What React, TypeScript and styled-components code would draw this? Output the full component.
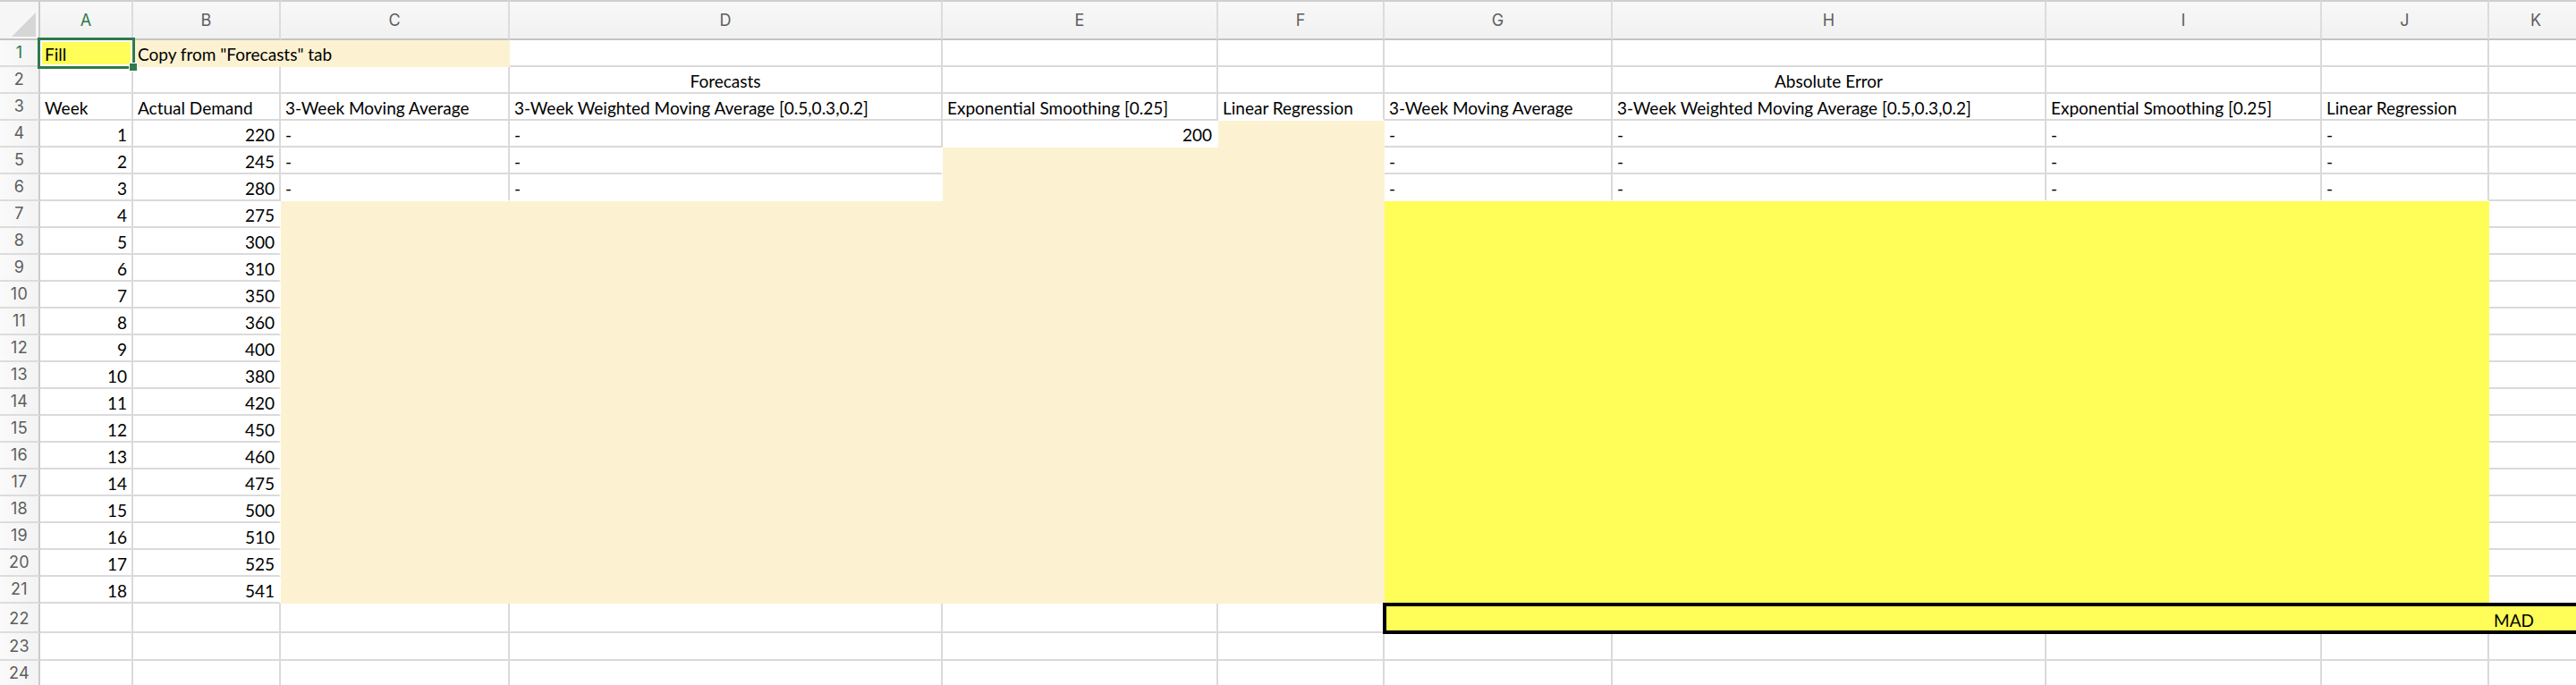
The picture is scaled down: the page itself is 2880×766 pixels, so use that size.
import React from 'react';
import styled, { createGlobalStyle } from 'styled-components';

type Fill = 'pale' | 'yellow' | undefined;
type Align = 'left' | 'right' | 'center';

interface CellDef {
  text?: string;
  align?: Align;
  span?: number;
}

const GRID = '#dadada';
const PALE = '#fcf2d2';
const YELLOW = '#fffd57';
const GREEN = '#2f7a4c';
const HEAD_TEXT = '#5e5e5e';

const COLS = ['A', 'B', 'C', 'D', 'E', 'F', 'G', 'H', 'I', 'J', 'K'];
const COL_WIDTHS = [45, 104, 165, 256, 484, 308, 186, 255, 485, 308, 187, 106];
const ROW_HEIGHTS = [45, ...Array(21).fill(30), 33, 31, 30];
const ROW_COUNT = 24;

const DEMAND = [220, 245, 280, 275, 300, 310, 350, 360, 400, 380, 420, 450, 460, 475, 500, 510, 525, 541];

const HEADERS = [
  'Week',
  'Actual Demand',
  '3-Week Moving Average',
  '3-Week Weighted Moving Average [0.5,0.3,0.2]',
  'Exponential Smoothing [0.25]',
  'Linear Regression',
  '3-Week Moving Average',
  '3-Week Weighted Moving Average [0.5,0.3,0.2]',
  'Exponential Smoothing [0.25]',
  'Linear Regression',
];

const fillAt = (r: number, c: number): Fill => {
  if (r === 1) {
    if (c === 0) return 'yellow';
    if (c === 1 || c === 2) return 'pale';
  }
  if (r === 4 && c === 5) return 'pale';
  if ((r === 5 || r === 6) && (c === 4 || c === 5)) return 'pale';
  if (r >= 7 && r <= 21) {
    if (c >= 2 && c <= 5) return 'pale';
    if (c >= 6 && c <= 9) return 'yellow';
  }
  if (r === 22 && c >= 6 && c <= 10) return 'yellow';
  return undefined;
};

const cellAt = (r: number, c: number): CellDef | null => {
  if (r === 1) {
    if (c === 0) return { text: 'Fill' };
    if (c === 1) return { text: 'Copy from "Forecasts" tab', span: 2 };
    if (c === 2) return null;
  }
  if (r === 2) {
    if (c === 3) return { text: 'Forecasts', align: 'center' };
    if (c === 7) return { text: 'Absolute Error', align: 'center' };
  }
  if (r === 3 && c < HEADERS.length) return { text: HEADERS[c] };
  if (r >= 4 && r <= 21) {
    if (c === 0) return { text: String(r - 3), align: 'right' };
    if (c === 1) return { text: String(DEMAND[r - 4]), align: 'right' };
    if (r <= 6 && (c === 2 || c === 3 || (c >= 6 && c <= 9))) return { text: '-' };
    if (r === 4 && c === 4) return { text: '200', align: 'right' };
  }
  if (r === 22 && c === 10) return { text: 'MAD' };
  return {};
};

const GlobalStyle = createGlobalStyle`
  html, body {
    margin: 0;
    padding: 0;
    background: #ffffff;
    overflow: hidden;
  }
  #root {
    width: 2880px;
    height: 766px;
    overflow: hidden;
  }
`;

const Sheet = styled.div`
  display: grid;
  grid-template-columns: ${COL_WIDTHS.map((w) => `${w}px`).join(' ')};
  grid-template-rows: ${ROW_HEIGHTS.map((h) => `${h}px`).join(' ')};
  width: max-content;
  font-family: Lato, 'Liberation Sans', sans-serif;
`;

const Corner = styled.div`
  grid-row: 1;
  grid-column: 1;
  box-sizing: border-box;
  background: #f6f6f6;
  border-top: 2px solid #cfcfcf;
  border-right: 2px solid #cbcbcb;
  border-bottom: 2px solid #c4c4c4;
  display: flex;
  align-items: flex-end;
  justify-content: flex-end;
`;

const ColHeader = styled.div<{ $col: number; $active: boolean }>`
  grid-row: 1;
  grid-column: ${(p) => p.$col};
  box-sizing: border-box;
  background: linear-gradient(#f8f8f8, #f1f1f1);
  border-top: 2px solid #cfcfcf;
  border-right: 2px solid #dcdcdc;
  border-bottom: 2px solid #c4c4c4;
  display: flex;
  align-items: center;
  justify-content: center;
  font-family: Inter, 'Liberation Sans', sans-serif;
  font-size: 18px;
  color: ${(p) => (p.$active ? GREEN : HEAD_TEXT)};
`;

const RowHeader = styled.div<{ $row: number; $active: boolean }>`
  grid-row: ${(p) => p.$row};
  grid-column: 1;
  box-sizing: border-box;
  background: linear-gradient(90deg, #fafafa, #f3f3f3);
  border-right: 2px solid #cbcbcb;
  border-bottom: 2px solid #dcdcdc;
  display: flex;
  align-items: flex-end;
  justify-content: center;
  padding-bottom: 4px;
  font-family: Inter, 'Liberation Sans', sans-serif;
  font-size: 18px;
  line-height: 20px;
  letter-spacing: 0.3px;
  color: ${(p) => (p.$active ? GREEN : HEAD_TEXT)};
`;

const Cell = styled.div<{
  $row: number;
  $col: number;
  $span: number;
  $fill: Fill;
  $align: Align;
  $hideRight: boolean;
  $hideBottom: boolean;
}>`
  grid-row: ${(p) => p.$row};
  grid-column: ${(p) => p.$col} / span ${(p) => p.$span};
  box-sizing: border-box;
  display: flex;
  align-items: flex-end;
  justify-content: ${(p) =>
    p.$align === 'right' ? 'flex-end' : p.$align === 'center' ? 'center' : 'flex-start'};
  padding: 0 5px 1px 5px;
  background: ${(p) => (p.$fill === 'pale' ? PALE : p.$fill === 'yellow' ? YELLOW : '#ffffff')};
  border-right: 2px solid ${(p) => (p.$hideRight ? 'transparent' : GRID)};
  border-bottom: 2px solid ${(p) => (p.$hideBottom ? 'transparent' : GRID)};
  font-size: 19px;
  line-height: 22px;
  color: #000000;
  white-space: nowrap;
`;

const Selection = styled.div`
  grid-row: 2;
  grid-column: 2;
  margin: -3px -2px -2px -3px;
  box-sizing: border-box;
  border: 3.5px solid ${GREEN};
  box-shadow: inset 0 0 0 2px #ffffff;
  position: relative;
  pointer-events: none;
`;

const FillHandle = styled.span`
  position: absolute;
  right: -6px;
  bottom: -6px;
  width: 8px;
  height: 8px;
  background: ${GREEN};
  border: 1.5px solid #ffffff;
`;

const RangeOutline = styled.div`
  grid-row: 23;
  grid-column: 8 / span 5;
  margin: -1px 0 -1px -2px;
  box-sizing: border-box;
  border: 4px solid #000000;
  pointer-events: none;
`;

const CornerMark = () => (
  <svg width="34" height="32" viewBox="0 0 34 32">
    <polygon points="4,30 31,30 31,3" fill="#d6d6d6" />
  </svg>
);

export default function App() {
  const cells: React.ReactNode[] = [];
  for (let r = 1; r <= ROW_COUNT; r++) {
    for (let c = 0; c < COLS.length; c++) {
      const def = cellAt(r, c);
      if (def === null) continue;
      const span = def.span ?? 1;
      const fill = fillAt(r, c);
      const lastCol = c + span - 1;
      const rightNeighbor = lastCol + 1 < COLS.length ? fillAt(r, lastCol + 1) : undefined;
      const below = r + 1 <= ROW_COUNT ? fillAt(r + 1, c) : undefined;
      cells.push(
        <Cell
          key={`${r}-${c}`}
          $row={r + 1}
          $col={c + 2}
          $span={span}
          $fill={fill}
          $align={def.align ?? 'left'}
          $hideRight={!!fill || !!rightNeighbor}
          $hideBottom={!!fill || !!below}
        >
          {def.text}
        </Cell>
      );
    }
  }

  return (
    <>
      <GlobalStyle />
      <Sheet>
        <Corner>
          <CornerMark />
        </Corner>
        {COLS.map((name, i) => (
          <ColHeader key={name} $col={i + 2} $active={i === 0}>
            {name}
          </ColHeader>
        ))}
        {Array.from({ length: ROW_COUNT }, (_, i) => (
          <RowHeader key={i} $row={i + 2} $active={i === 0}>
            {i + 1}
          </RowHeader>
        ))}
        {cells}
        <RangeOutline />
        <Selection>
          <FillHandle />
        </Selection>
      </Sheet>
    </>
  );
}
